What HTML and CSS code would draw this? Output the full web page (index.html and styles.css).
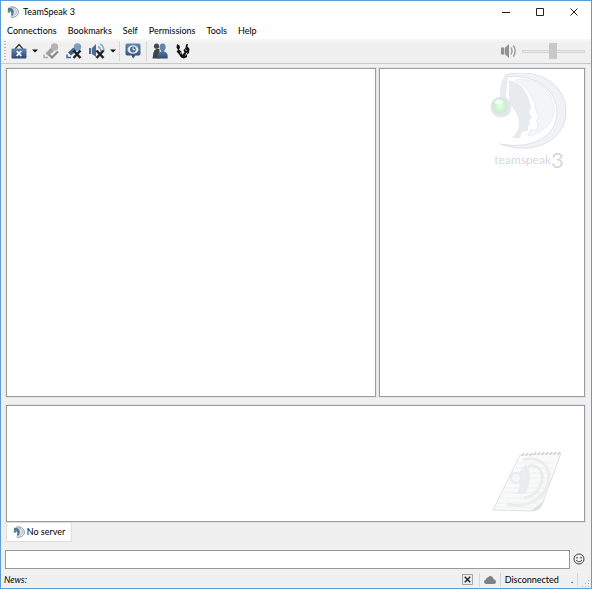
FILE: index.html
```html
<!DOCTYPE html>
<html lang="en">
<head>
<meta charset="utf-8">
<title>TeamSpeak 3</title>
<link rel="stylesheet" href="styles.css">
</head>
<body>
<svg class="defs" aria-hidden="true">
  <defs>
    <linearGradient id="blue" x1="0" y1="0" x2="0" y2="1"><stop offset="0" stop-color="#6286b0"/><stop offset="1" stop-color="#2d4a70"/></linearGradient>
    <linearGradient id="page" x1="0" y1="0" x2="1" y2="1"><stop offset="0" stop-color="#fcfcfc"/><stop offset=".8" stop-color="#f7f8f8"/><stop offset="1" stop-color="#dedede"/></linearGradient>
    <radialGradient id="green"><stop offset="0" stop-color="#eaffea"/><stop offset=".6" stop-color="#cdf5d0"/><stop offset="1" stop-color="#d3e6d8"/></radialGradient>
    <symbol id="logo" viewBox="0 0 12 12">
      <path d="M3 1.200C7 .2 11.300 2.300 11.300 6.300C11.300 10 7 12 3.500 10.900" fill="none" stroke="#7288a3" stroke-width="1"/>
      <path d="M4 2.300C7.500 1.500 9.600 4 9.400 6.200C9.200 8.500 7.800 9.200 6.500 9.500" fill="#dbe4ed" stroke="#8fa2b8" stroke-width=".8"/>
      <path d="M1.200 1.500L4.200 2.200C6 3 6.600 4.300 6.900 5.600L6.500 7.400L5.700 9.800L3.800 9.500C4.800 7.500 4.400 5.500 2.800 4.500L.8 4.200Z" fill="#55718f"/>
      <circle cx="2" cy="5.400" r="1.400" fill="#439966"/>
    </symbol>
  </defs>
</svg>
<div class="window">
  <header class="titlebar">
    <svg class="app-icon" aria-hidden="true"><use href="#logo"/></svg>
    <h1>TeamSpeak 3</h1>
    <div class="caption">
      <button type="button" aria-label="Minimize"><svg viewBox="0 0 10 10"><path d="M1 5.500h8"/></svg></button>
      <button type="button" aria-label="Maximize"><svg viewBox="0 0 10 10"><path d="M1.500 1.500h7v7h-7z"/></svg></button>
      <button type="button" aria-label="Close"><svg viewBox="0 0 10 10"><path d="M1.500 1.500l7 7M8.500 1.500l-7 7"/></svg></button>
    </div>
  </header>
  <nav class="menubar">
    <button type="button">Connections</button>
    <button type="button">Bookmarks</button>
    <button type="button">Self</button>
    <button type="button">Permissions</button>
    <button type="button">Tools</button>
    <button type="button">Help</button>
  </nav>
  <div class="toolbar">
    <span class="grip"></span>
    <button type="button" aria-label="Away status"><svg viewBox="0 0 16 16"><path d="M4 6L8 1.500L12 6" fill="none" stroke="#333" stroke-width="1.300"/><rect x=".5" y="5.500" width="15" height="10" rx="1" fill="url(#blue)"/><path d="M5.700 8l4.600 5M10.300 8l-4.600 5" stroke="#fff" stroke-width="1.700"/></svg></button>
    <button type="button" class="drop" aria-label="Away options"><svg viewBox="0 0 6 4"><path d="M0 .5h6L3 3.500z" fill="#111"/></svg></button>
    <button type="button" aria-label="Microphone"><svg viewBox="0 0 16 16"><circle cx="11.500" cy="4" r="3.700" fill="#b4b4b4"/><path d="M7.500 5L11 8.500L5 12.500L2.500 10.500Z" fill="#a0a0a0"/><path d="M1 11.500v3h4" fill="none" stroke="#aaa" stroke-width="1.500"/><path d="M6 11.500l3 3L15 8.500" fill="none" stroke="#888" stroke-width="2.200"/></svg></button>
    <button type="button" aria-label="Mute microphone"><svg viewBox="0 0 16 16"><circle cx="11.500" cy="4" r="3.700" fill="#7c9cc0"/><path d="M7.500 4.500L10.500 8L5 12.500L2 9.500Z" fill="#416087"/><path d="M1 11.500v3h4" fill="none" stroke="#45678f" stroke-width="1.500"/><path d="M7.500 7.500l7 7.500M14.500 7.500l-7 7.500" stroke="#222" stroke-width="2.500"/></svg></button>
    <button type="button" aria-label="Mute speakers"><svg viewBox="0 0 16 16"><path d="M0 5h2.200v6H0zM3 5L7 1v13l-4-3z" fill="#4b6b91"/><path d="M9 3.500c2 1 3 3 3 5M11 1c3 1.500 4 4.500 4 7" fill="none" stroke="#8da6c4" stroke-width="1.400"/><path d="M7.500 7.500l7 7.500M14.500 7.500l-7 7.500" stroke="#222" stroke-width="2.500"/></svg></button>
    <button type="button" class="drop" aria-label="Speaker options"><svg viewBox="0 0 6 4"><path d="M0 .5h6L3 3.500z" fill="#111"/></svg></button>
    <span class="divider"></span>
    <button type="button" aria-label="Whisper history"><svg viewBox="0 0 16 16"><path d="M2 .5h12q1.500 0 1.500 2v8q0 2-1.500 2h-3.500L8 15.500l-1.500-3H2q-1.500 0-1.500-2v-8q0-2 1.500-2z" fill="url(#blue)"/><ellipse cx="8" cy="6.500" rx="5.500" ry="4.300" fill="#dce6f0"/><circle cx="8" cy="6.500" r="2.900" fill="#496a94"/><path d="M8 4.300v2.400h2.200" fill="none" stroke="#fff"/></svg></button>
    <span class="divider"></span>
    <button type="button" aria-label="Contacts"><svg viewBox="0 0 16 16"><circle cx="4.500" cy="3.200" r="2.600" fill="#444b50"/><path d="M.5 15.500l1-6q.5-3 3-3.500h3v9.500z" fill="#3d4448"/><ellipse cx="10.600" cy="4.200" rx="3" ry="3.700" fill="#6484aa"/><path d="M5.500 15.500V13q0-3 3.700-4.500v-2h3v2q3.500 1 3.500 4.500v2.500z" fill="url(#blue)"/></svg></button>
    <button type="button" aria-label="Overwolf"><svg viewBox="0 0 16 16"><path d="M2 1L4.500 2.500L5 4.500L4 6.500L6.500 8.500L7 12L9.500 9.500L8.500 7L10.500 5L11 1.500L13 1L12.500 3.500L14.500 6L14 10L12 11.500V14L9 15.500L6 14.500L4.500 12L3 10L1.500 8.500L3 7L1.500 4.500Z" fill="#111"/><path d="M6.500 8.500l-1 2M10.500 12.500l1.500-3M10.500 6.500l1 1.500" stroke="#eee" stroke-width=".9"/></svg></button>
    <div class="volume">
      <svg viewBox="0 0 16 16" aria-hidden="true"><path d="M0 4.500h3v7H0zM3.700 5L8 1v14l-4.300-4z" fill="#929292"/><path d="M10 4.500q2 3.500 0 7M12.300 2.500q3.700 5.500 0 11" fill="none" stroke="#999" stroke-width="1.400"/></svg>
      <input type="range" min="0" max="100" value="49" aria-label="Volume">
    </div>
  </div>
  <main class="workspace">
    <div class="top-row">
      <section class="panel" aria-label="Channels"></section>
      <section class="panel info" aria-label="Information">
        <div class="brand">
          <svg class="brand-mark" viewBox="0 0 78 76" aria-hidden="true">
            <path d="M15 2C43-6 76 8 76 39C76 68 43 83 10 71C43 77 67 63 67 39C67 14 40 0 15 4Z" fill="#f1f2f5" stroke="#e0e2e7"/>
            <path d="M25 7C45 4 64 17 64 37C64 50 52 61 38 63L40 57H47L48 50L46 48L49 45L46 37C44 24 37 14 25 7Z" fill="#f3f5f8" stroke="#ebedf2"/>
            <path d="M10 23C10 11 12 3 18 3L16 24C21 29 20 38 17 41L10 38Z" fill="#eaebef"/>
            <path d="M19 7C33 10 39 22 41 35L39 39L42 45L39 47L40 50L38 53V58L32 59L30 65H21C31 58 32 46 22 34C18 28 19 17 19 7Z" fill="#e9eaee"/>
            <circle cx="11" cy="34" r="10.500" fill="#e4e7ec"/><circle cx="10" cy="33" r="8" fill="url(#green)"/><ellipse cx="9" cy="29" rx="4" ry="2.500" fill="#f3fff3"/>
          </svg>
          <p class="wordmark">teamspeak<span>3</span></p>
        </div>
      </section>
    </div>
    <section class="panel chat" aria-label="Chat">
      <svg class="notepad" viewBox="0 0 70 62" aria-hidden="true">
        <path d="M28 4L69 2L51 51Q49 60 39 60L1 59Z" fill="url(#page)" stroke="#e0e0e0"/>
        <path d="M25 12h37M23 17h37M20 22h39M18 27h39M16 32h40M13 37h41M11 42h41M8 47h43M6 52h43M4 56h36" stroke="#edeff1"/>
        <path d="M31 9C47 4 61 16 56 33C52 48 33 58 15 53M36 15C47 12 54 24 48 35C45 43 38 46 32 47" fill="none" stroke="#ececed" stroke-width="3"/>
        <path d="M34 13C40 23 39 34 33 43H24C31 34 27 27 24 25Z" fill="#ebeced"/><circle cx="24" cy="27" r="5" fill="#f5f6f6" stroke="#e9eaeb" stroke-width="2"/>
        <path d="M51 51Q49 60 39 60Q45 54 51 51Z" fill="#e0e0e0"/>
        <path d="M30 5l2-3M34 5l2-3M38 5l2-3M42 4l2-3M46 4l2-3M50 4l2-3M54 4l2-3M58 4l2-3M62 4l2-3M66 4l2-3" stroke="#ccc" stroke-width="1.300"/>
      </svg>
    </section>
    <div class="tabs" role="tablist"><button type="button" role="tab" aria-selected="true"><svg class="app-icon" aria-hidden="true"><use href="#logo"/></svg>No server</button></div>
    <form class="compose">
      <input type="text" aria-label="Message">
      <button type="button" aria-label="Emoticons"><svg viewBox="0 0 12 12"><circle cx="6" cy="6" r="5" fill="none" stroke="#444"/><circle cx="4" cy="4.700" r=".8" fill="#333"/><circle cx="8" cy="4.700" r=".8" fill="#333"/><path d="M3 7q3 3.500 6 0" fill="none" stroke="#444"/></svg></button>
    </form>
  </main>
  <footer class="statusbar">
    <em>News:</em>
    <button type="button" aria-label="Close news"><svg viewBox="0 0 12 12"><path d="M.5.5h11v11H.5z" fill="#eee" stroke="#999"/><path d="M3 3l6 6M9 3l-6 6" stroke="#222" stroke-width="1.600"/></svg></button>
    <span class="divider"></span>
    <svg class="cloud" viewBox="0 0 12 8" aria-hidden="true"><path d="M2.500 8Q0 8 0 5.700Q0 4 2 3.500Q2 1 4 1.500Q6-1 8.500 1Q9.500 2 9.500 3.200Q12 3.500 12 5.700Q12 8 9.500 8Z" fill="#808080"/></svg>
    <span class="divider"></span>
    <span class="state">Disconnected</span>
    <span class="dot">.</span>
    <span class="divider"></span>
    <svg class="resize" viewBox="0 0 8 8" aria-hidden="true"><path d="M6 0h1v1H6zM3 3h1v1H3zM6 3h1v1H6zM0 6h1v1H0zM3 6h1v1H3zM6 6h1v1H6z" fill="#aaa"/></svg>
  </footer>
</div>
</body>
</html>
```
FILE: styles.css
```css
* { box-sizing: border-box; }
body { margin: 0; font: 9px/12px Lato, "Open Sans", sans-serif; color: #000; }
button { display: flex; align-items: center; justify-content: center; margin: 0; padding: 0; border: 0; background: none; font: inherit; color: inherit; }
svg { display: block; flex: none; }
.defs { position: absolute; width: 0; height: 0; }
.window { display: flex; flex-direction: column; min-height: 100vh; border: 1px solid #5a9bd8; background: #f0f0f0; }
.titlebar { display: flex; align-items: center; height: 21px; padding-left: 6px; background: #fff; }
.app-icon { width: 12px; height: 12px; }
h1 { margin: 0 auto 0 4px; font-size: 9px; font-weight: 400; }
.caption { display: flex; }
.caption button { width: 34px; height: 20px; }
.caption svg { width: 10px; height: 10px; fill: none; stroke: #222; }
.menubar { display: flex; gap: 11px; height: 17px; padding-left: 6px; background: #fff; }
.toolbar { display: flex; align-items: center; height: 25px; padding: 0 6px 0 3px; border-bottom: 1px solid #c8c8c8; background: linear-gradient(#f8f8f8, #f0f0f0 4px); }
.toolbar button { width: 16px; height: 20px; margin-right: 7px; }
.toolbar button svg { width: 16px; height: 16px; }
.grip { width: 2px; height: 20px; margin-right: 5px; background: repeating-linear-gradient(#bbb 0 1px, transparent 1px 3px); }
.toolbar .drop { width: 6px; margin: 0 5px 0 -2px; }
.toolbar .drop svg { width: 6px; height: 4px; }
.divider { flex: none; width: 1px; height: 20px; background: #d8d8d8; }
.toolbar .divider { margin: 0 5px 0 -2px; }
.volume { display: flex; align-items: center; gap: 5px; margin-left: auto; }
.volume svg { width: 16px; height: 16px; }
.volume input { appearance: none; width: 63px; height: 16px; margin: 0; background: none; }
.volume input::-webkit-slider-runnable-track { height: 3px; border: 1px solid #d4d6d6; background: #e8eaea; }
.volume input::-webkit-slider-thumb { appearance: none; width: 8px; height: 16px; margin-top: -8px; background: #c8c8c8; }
.workspace { display: grid; flex: 1; grid-template-rows: minmax(0, 330fr) minmax(0, 125fr) 28px 19px; padding: 4px 6px 0 5px; }
.top-row { display: grid; grid-template-columns: minmax(0, 370fr) minmax(0, 206fr); gap: 3px; }
.panel { border: 1px solid #999ca0; background: #fff; box-shadow: 0 0 0 1px #e2e3e4; }
.info { display: flex; justify-content: flex-end; padding: 4px 16px 0 0; }
.brand-mark { width: 78px; height: 76px; }
.wordmark { display: flex; align-items: center; justify-content: center; margin: 0; color: #d5d8e0; font: 400 12px/22px Lato, sans-serif; }
.wordmark span { font-size: 22px; }
.chat { display: flex; align-items: flex-end; justify-content: flex-end; margin-top: 8px; padding: 0 22px 8px 0; }
.notepad { width: 70px; height: 62px; }
.tabs { display: flex; align-items: flex-start; }
.tabs button { gap: 2px; width: 66px; height: 20px; border: 1px solid #ddd; background: #fff; }
.compose { display: flex; align-items: center; gap: 3px; margin-left: -1px; }
.compose input { flex: 1; min-width: 0; height: 19px; padding: 0 4px; border: 1px solid #999; background: #fff; font: inherit; }
.compose svg { width: 12px; height: 12px; }
.statusbar { display: flex; align-items: center; height: 19px; padding: 2px 1px 0 3px; }
.statusbar em { margin-right: auto; }
.statusbar button { margin-right: 2px; }
.statusbar button svg { width: 11px; height: 11px; }
.statusbar .divider { height: 14px; margin: 0 4px; }
.cloud { width: 12px; height: 8px; }
.dot { margin-left: 12px; }
.resize { width: 8px; height: 8px; align-self: flex-end; }
```
